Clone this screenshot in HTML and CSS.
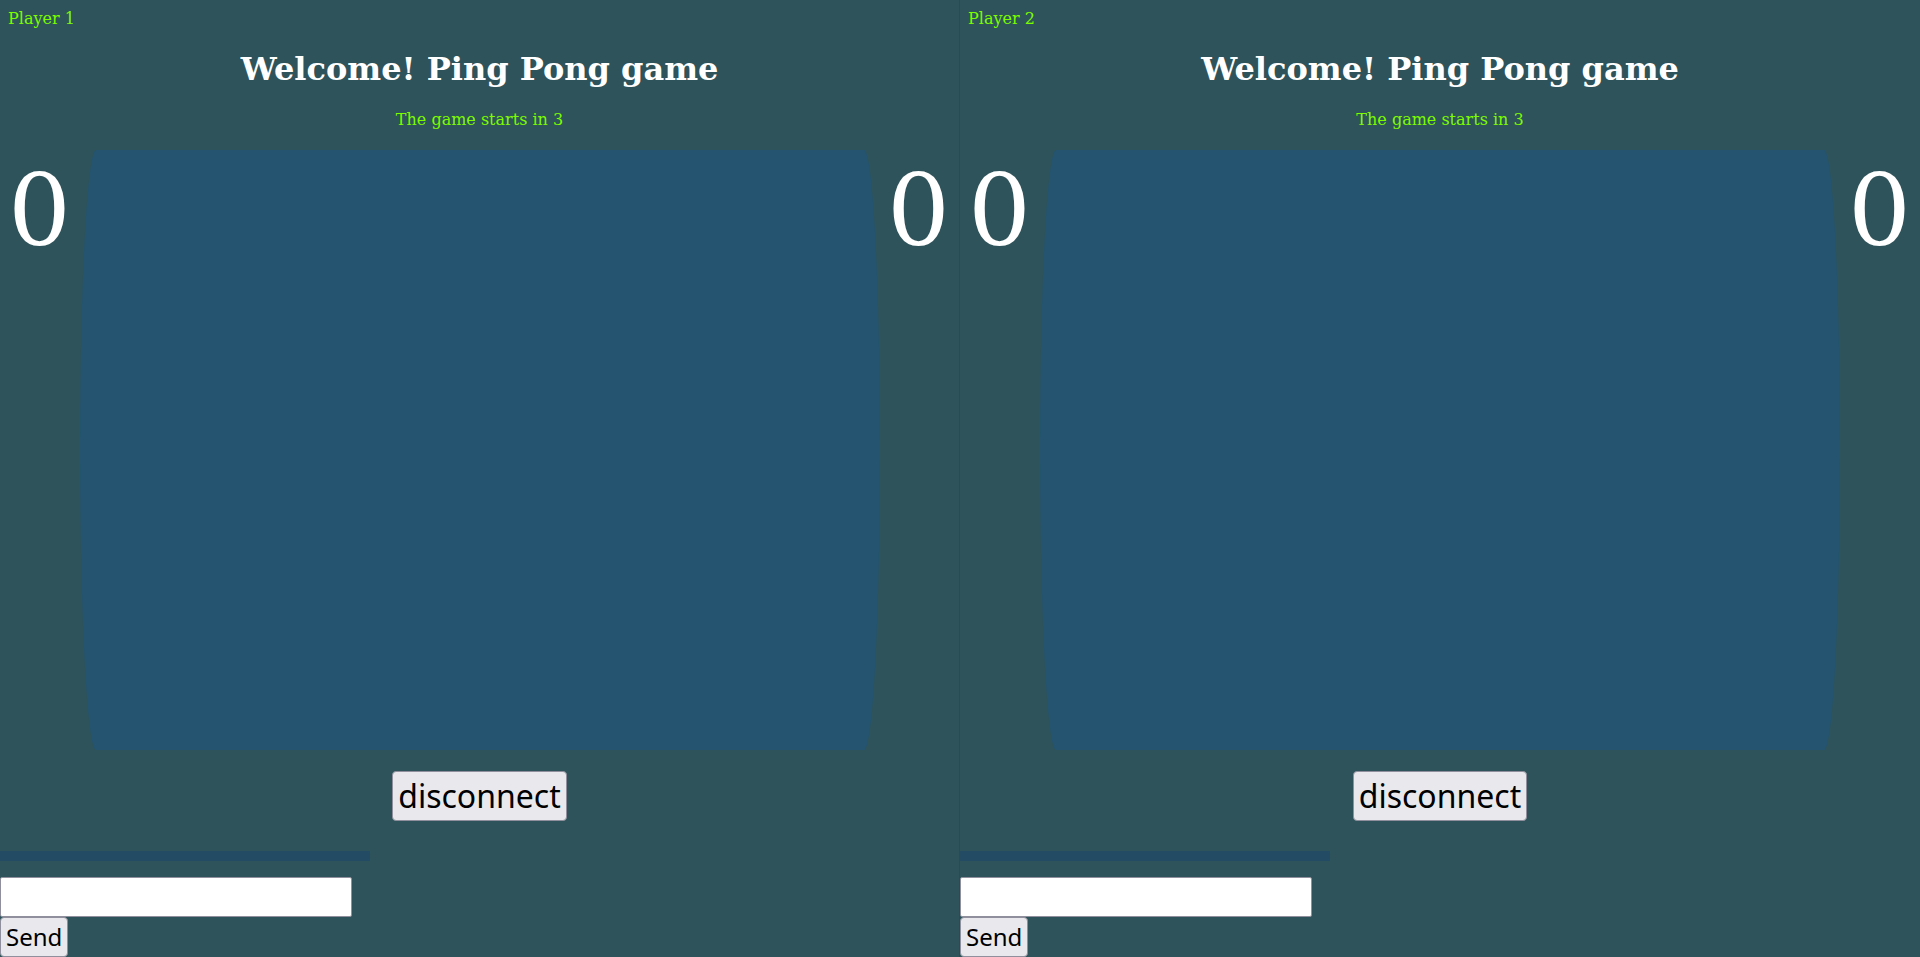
FILE: index.html
```html
<!DOCTYPE html>
<html lang="en">
<head>
<meta charset="utf-8">
<title>Ping Pong</title>
<link rel="stylesheet" href="styles.css">
</head>
<body>
<div class="screen">
  <section class="pane pane-left">
    <div class="player">Player 1</div>
    <h1 class="title">Welcome! Ping Pong game</h1>
    <p class="status">The game starts in 3</p>
    <div class="arena">
      <div class="score">0</div>
      <div class="board"></div>
      <div class="score">0</div>
    </div>
    <div class="controls"><button class="disconnect">disconnect</button></div>
    <div class="chat-log"></div>
    <input class="chat-input" type="text">
    <div><button class="send">Send</button></div>
  </section>
  <section class="pane">
    <div class="player">Player 2</div>
    <h1 class="title">Welcome! Ping Pong game</h1>
    <p class="status">The game starts in 3</p>
    <div class="arena">
      <div class="score">0</div>
      <div class="board"></div>
      <div class="score">0</div>
    </div>
    <div class="controls"><button class="disconnect">disconnect</button></div>
    <div class="chat-log"></div>
    <input class="chat-input" type="text">
    <div><button class="send">Send</button></div>
  </section>
</div>
</body>
</html>
```
FILE: styles.css
```css
html, body {
  margin: 0;
  padding: 0;
  height: 957px;
  overflow: hidden;
  background: #2e535a;
  font-family: "DejaVu Serif", serif;
}

.screen {
  display: flex;
  width: 1920px;
  height: 957px;
}

.pane {
  width: 960px;
  height: 957px;
  overflow: hidden;
  box-sizing: border-box;
  background: #2e535a;
  display: flex;
  flex-direction: column;
  align-items: flex-start;
}

.pane-left {
  border-right: 1px solid #2a4b51;
}

.player {
  margin: 9px 0 0 8px;
  font-size: 16px;
  line-height: 19px;
  color: #7cfc00;
}

.title {
  align-self: stretch;
  margin: 23px 0 0;
  font-size: 32px;
  line-height: 37px;
  font-weight: bold;
  color: #ffffff;
  text-align: center;
}

.status {
  align-self: stretch;
  margin: 22px 0 0;
  font-size: 16px;
  line-height: 19px;
  color: #7cfc00;
  text-align: center;
}

.arena {
  align-self: stretch;
  margin-top: 21px;
  padding: 0 8px;
  display: flex;
  justify-content: space-between;
  align-items: flex-start;
}

.score {
  font-size: 99px;
  line-height: 121px;
  color: #ffffff;
  width: 64px;
}

.board {
  width: 800px;
  height: 600px;
  background: #245470;
  border-radius: 16px / 300px;
}

.controls {
  align-self: stretch;
  margin-top: 21px;
  display: flex;
  justify-content: center;
}

.disconnect {
  font-family: "Noto Sans", sans-serif;
  font-size: 32px;
  line-height: 44px;
  padding: 2px 5px;
  background: #e9e9ed;
  color: #000;
  border: 1px solid #8f8f9d;
  border-radius: 4px;
}

.chat-log {
  margin-top: 30px;
  width: 370px;
  height: 10px;
  background: #234b63;
}

.chat-input {
  margin: 16px 0 0;
  width: 352px;
  height: 40px;
  box-sizing: border-box;
  background: #ffffff;
  border: 1px solid #8f8f9d;
  border-radius: 2px;
  padding: 0 4px;
  font-family: "Noto Sans", sans-serif;
  font-size: 16px;
}

.send {
  margin: 0;
  height: 40px;
  box-sizing: border-box;
  font-family: "Noto Sans", sans-serif;
  font-size: 24px;
  line-height: 32px;
  padding: 2px 5px;
  background: #e9e9ed;
  color: #000;
  border: 1px solid #8f8f9d;
  border-radius: 4px;
}
```
